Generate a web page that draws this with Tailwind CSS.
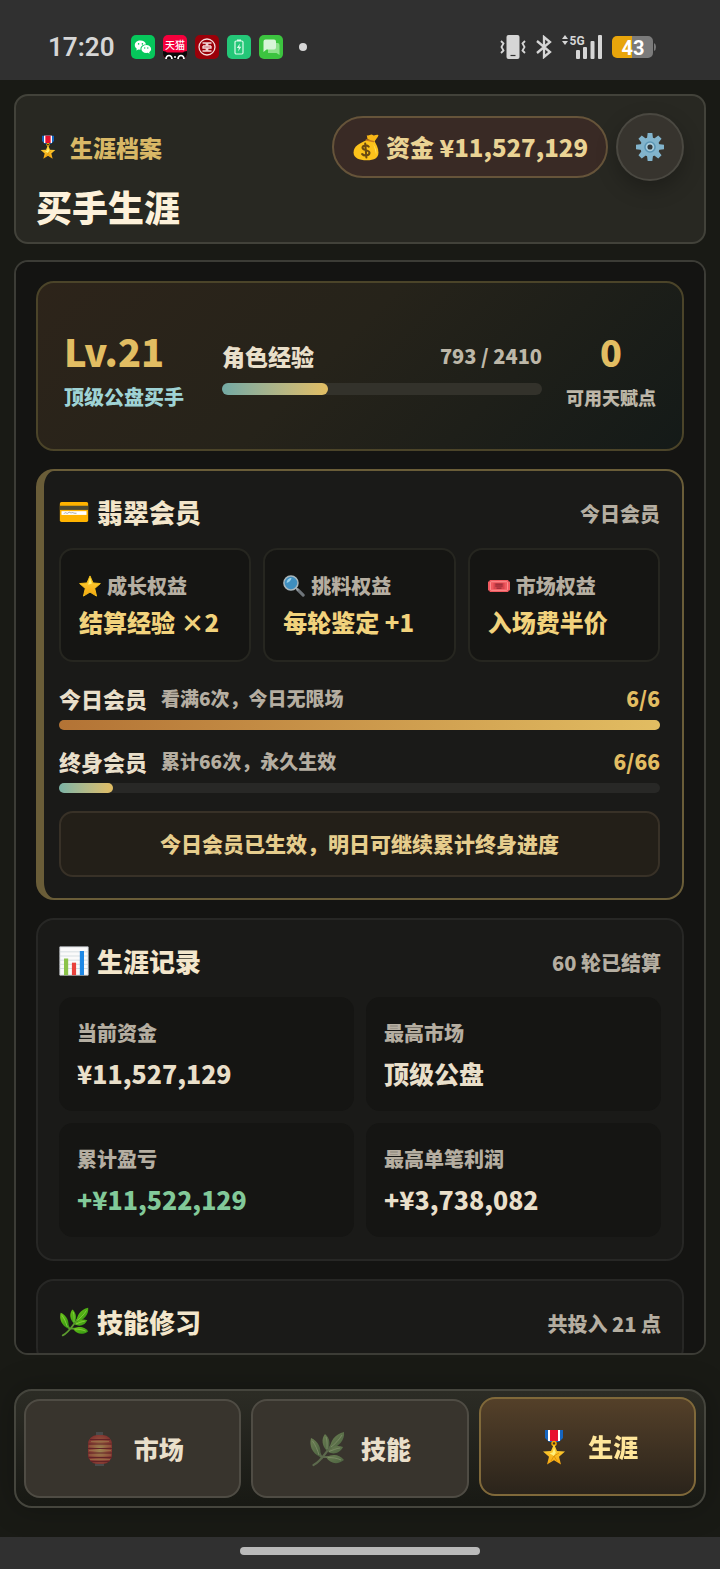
<!DOCTYPE html>
<html lang="zh-CN">

<head>
    <meta charset="UTF-8">
    <meta name="viewport" content="width=device-width, initial-scale=1.0">
    <title>买手生涯</title>
    <script src="https://cdn.jsdelivr.net/npm/@tailwindcss/browser@4"></script>
</head>

<body class="flex h-screen flex-col overflow-hidden bg-[#191a15] font-['Noto_Sans_CJK_SC',sans-serif] font-black text-[#e9dfca]">

    <!-- Shared icons -->
    <svg class="absolute size-0" aria-hidden="true">
        <defs>
            <linearGradient id="gold" x1="0" y1="0" x2="0" y2="1">
                <stop offset="0" stop-color="#ffd93d" />
                <stop offset="1" stop-color="#f5a50f" />
            </linearGradient>
            <linearGradient id="leafFill" x1="0" y1="0" x2="1" y2="1">
                <stop offset="0" stop-color="#6cc417" />
                <stop offset="1" stop-color="#2f9412" />
            </linearGradient>
            <radialGradient id="lampFill" cx=".5" cy=".5" r=".6">
                <stop offset="0" stop-color="#ffe57a" />
                <stop offset=".5" stop-color="#e8734a" />
                <stop offset="1" stop-color="#c01f2c" />
            </radialGradient>
        </defs>
        <symbol id="medal" viewBox="0 0 36 36">
            <path fill="#1565c0" d="M9 1h18v8l-4 4H13l-4-4z" />
            <path fill="#fff" d="M12 1h12v11H12z" />
            <path fill="#e8102e" d="M14 1h8v11h-8z" />
            <circle cx="18" cy="14.500" r="2" fill="none" stroke="#f2a600" stroke-width="1.500" />
            <path fill="url(#gold)" d="M18 15l3 7 8 .6-6 5.200 2 7.700-7-4.200-7 4.200 2-7.700-6-5.200 8-.6z" />
            <path fill="#fff07a" d="M18 19l1.800 4.500L18 27l-4.500-2.800 3-.7z" />
            <path fill="none" stroke="#d98a00" stroke-width=".7" d="M18 27l5-3M18 27l3 5M18 27l-3 5" />
        </symbol>
        <symbol id="leaf" viewBox="0 0 36 36">
            <path fill="none" stroke="#5c9a2e" stroke-width="2.200" stroke-linecap="round" d="M4.500 34C12 31 16 22 26 10M13 27L8 18M15 26h12M19 19l-3-8M20 19h10" />
            <g fill="url(#leafFill)">
                <path d="M2 7c7 3 11 10 9 19C3 22 0 15 2 7z" />
                <path d="M16 3c5 4 6 11 2 17-5-5-6-12-2-17z" />
                <path d="M35 1c1 8-5 15-14 17C21 10 26 3 35 1z" />
                <path d="M34 16c-3 6-9 8-15 5 4-6 9-7 15-5z" />
                <path d="M35 29c-6 5-14 4-18-3 7-3 13-3 18 3z" />
            </g>
            <path fill="none" stroke="#a5e05a" stroke-width=".7" d="M3.500 10c3 4 5 9 6.500 14M17 6c1.500 4 1 8 1 12M33 4c-3 5-7 9-11 12M31 17c-4 .5-7 2-11 3.500M32 29c-4-2-9-2.500-13-2.500" />
        </symbol>
        <symbol id="lantern" viewBox="0 0 36 36">
            <path fill="#5b6068" d="M14 1h7v4h-7zM13 32h9v3h-9z" />
            <rect x="6" y="4" width="24" height="29" rx="9" fill="url(#lampFill)" />
            <path fill="none" stroke="#8d1420" stroke-width="1.200" d="M8 8.500h20M6 13h24M6 17.500h24M6 22h24M6 26.500h24M9 30.500h18" />
            <path fill="none" stroke="#ffb968" stroke-width=".7" d="M9 10.500h18M7 15h22M7 19.500h22M7 24h22M8 28.500h20" />
        </symbol>
        <symbol id="moneybag" viewBox="0 0 36 36">
            <path fill="#f8b616" d="M20 8l-1-5c3 1 4-1 6-1s2 2 4 1c2-1 5-1 5 0-1 3-3 5-5 8z" />
            <path fill="#fcc21b" d="M19 9h9c3 5 6 10 6 16 0 7-5 10-15 10S2 32 2 25c0-8 8-12 17-16z" />
            <path fill="none" stroke="#c6791a" stroke-width="2" stroke-linecap="round" d="M18.500 9l9 2" />
            <path fill="#ffe05c" d="M27 14c4 5 5 10 4 14-1-5-2-10-4-14z" />
            <path fill="none" stroke="#6b4a12" stroke-width="2.600" stroke-linecap="round" d="M21.500 17.500c-2-2.500-8-2-8 1.500 0 4 9 2 9 6.500 0 4-7 4.500-9.500 1.500M17 13.500l1.500 18" />
        </symbol>
        <symbol id="gear" viewBox="0 0 36 36">
            <g fill="#82b4cc">
                <path d="M15 0h6l1 8h-8zM15 36h6l1-8h-8zM0 15v6l8 1v-8zM36 15v6l-8 1v-8z" />
                <path d="M15 0h6l1 8h-8zM15 36h6l1-8h-8zM0 15v6l8 1v-8zM36 15v6l-8 1v-8z" transform="rotate(45 18 18)" />
                <circle cx="18" cy="18" r="12.500" />
            </g>
            <circle cx="18" cy="18" r="7.500" fill="#5b95b4" />
            <circle cx="18" cy="18" r="5.500" fill="#a9cede" />
            <circle cx="18" cy="18" r="3.300" fill="#33383a" />
        </symbol>
        <symbol id="card" viewBox="0 0 36 36">
            <rect x="1" y="6" width="34" height="24" rx="2" fill="#ffb300" />
            <path fill="#4e4a32" d="M1 10.500h34v5H1z" />
            <path fill="#fff" d="M3 17h30v4.500H3z" />
            <path fill="none" stroke="#666" stroke-width=".7" d="M6 20c2-3 3 1 5-1s3 1 4 0 3 1 6 .5" />
        </symbol>
        <symbol id="star" viewBox="0 0 36 36">
            <path fill="url(#gold)" stroke="#fcc419" stroke-width="1.500" stroke-linejoin="round" d="M18 1.500l5 11.500 12 1-9.300 8 3 12.500L18 28 7.300 34.500l3-12.500L1 14l12-1z" />
            <path fill="#fff176" d="M18 5l3 9-6 2z" />
        </symbol>
        <symbol id="lens" viewBox="0 0 36 36">
            <path stroke="#6f757a" stroke-width="5" stroke-linecap="round" d="M24 24l9 9" />
            <path stroke="#9aa2a8" stroke-width="3" d="M21 21l4 4" />
            <circle cx="13" cy="13" r="11.500" fill="#3f8fc0" stroke="#a9b7bd" stroke-width="2.500" />
            <path fill="#9ad0ea" d="M6 13c0-5 4-8 8-8-1 4-4 7-8 8z" />
        </symbol>
        <symbol id="ticket" viewBox="0 0 36 36">
            <path fill="#f0595f" d="M3 8h30a3 3 0 0 0 3 3v14a3 3 0 0 0-3 3H3a3 3 0 0 0-3-3V11a3 3 0 0 0 3-3z" />
            <rect x="4" y="11" width="28" height="14" rx="1.500" fill="none" stroke="#ff9d9d" stroke-width="1.300" />
            <rect x="9" y="13" width="18" height="10" fill="#d8454d" />
            <path fill="none" stroke="#7d2430" stroke-width="1.500" d="M12 15h12M12 18h12M14 21.500h8" />
        </symbol>
        <symbol id="chart" viewBox="0 0 36 36">
            <path fill="#fafafa" stroke="#c9cdd0" d="M1 1h34v34H1z" />
            <path stroke="#cfd8dc" d="M1 7h34M1 12h34M1 17h34M1 22h34M1 27h34" />
            <path fill="#8bc34a" d="M6 15h5v20H6z" />
            <path fill="#e8413c" d="M15.500 20h5v15h-5z" />
            <path fill="#1e88e5" d="M25 6h5v29h-5z" />
        </symbol>
    </svg>

    <!-- Status bar -->
    <div class="flex h-20 shrink-0 items-center justify-between bg-[#303030] px-12 pt-3.5 text-[#d6d6d6]">
        <div class="flex items-center gap-2">
            <span class="mr-2 font-['Roboto',sans-serif] text-[26px] leading-8 font-semibold">17:20</span>
            <svg class="size-6" viewBox="0 0 24 24">
                <rect width="24" height="24" rx="5" fill="#06c75b" />
                <path fill="#fff" d="M9.500 5.500c-3.300 0-5.700 2.100-5.700 4.700 0 1.500.8 2.700 2 3.500l-.5 1.800 2.200-1.100 2 .3c-.4-3.300 2-5.400 5.500-5.300-.5-2.300-2.700-3.900-5.500-3.900z" />
                <path fill="#fff" d="M15.300 10c-2.800 0-4.900 1.800-4.900 4s2.100 4 4.900 4l1.500-.2 1.800.9-.4-1.500c1.200-.8 1.900-1.900 1.900-3.200 0-2.200-2.100-4-4.800-4z" />
                <g fill="#06c75b">
                    <circle cx="7.600" cy="8.900" r=".8" />
                    <circle cx="11.400" cy="8.900" r=".8" />
                    <circle cx="13.700" cy="13" r=".7" />
                    <circle cx="16.800" cy="13" r=".7" />
                </g>
            </svg>
            <svg class="size-6" viewBox="0 0 24 24">
                <rect width="24" height="24" rx="5" fill="#f5003c" />
                <path fill="#090909" d="M0 16q3 0 4 1.500h16q1-1.500 4-1.500v3a5 5 0 0 1-5 5H5a5 5 0 0 1-5-5z" />
                <g fill="none" stroke="#fff" stroke-width="1.700">
                    <path d="M3 24a3 3.500 0 0 1 6 0M15 24a3 3.500 0 0 1 6 0" />
                </g>
                <circle cx="12" cy="22" r="1" fill="#fff" />
                <text x="12" y="13.500" text-anchor="middle" font-size="10" font-weight="500" fill="#fff">天猫</text>
            </svg>
            <svg class="size-6" viewBox="0 0 24 24">
                <rect width="24" height="24" rx="5" fill="#9b0009" />
                <g fill="none" stroke="#f5dddd" stroke-width="1.300">
                    <circle cx="12" cy="12" r="8" />
                    <path d="M7.500 8h3.800v3H8M7.500 16h3.800v-3H8v-2M16.500 8h-3.800v3H16M16.500 16h-3.800v-3H16v-2" />
                </g>
            </svg>
            <svg class="size-6" viewBox="0 0 24 24">
                <rect width="24" height="24" rx="5" fill="#24c778" />
                <rect x="8" y="6" width="8" height="13" rx="1.200" fill="none" stroke="#d9fbe9" stroke-width="1.200" />
                <path fill="#d9fbe9" d="M10 4.500h4v1.500h-4zM12.800 8.500l-3 4.500h2l-.7 3.500 3.200-4.700h-2z" />
            </svg>
            <svg class="size-6" viewBox="0 0 24 24">
                <rect width="24" height="24" rx="5" fill="#3cc43f" />
                <path fill="#8ee18b" d="M9 8h9.500a2 2 0 0 1 2 2v10l-3-2H9z" />
                <path fill="#d8f5d8" d="M6.500 4.500H15a2 2 0 0 1 2 2v6a2 2 0 0 1-2 2H7.500l-3 2.500V6.500a2 2 0 0 1 2-2z" />
            </svg>
            <span class="ml-2 size-2 rounded-full bg-[#d6d6d6]"></span>
        </div>
        <div class="mr-4 flex items-center gap-2.5">
            <svg class="h-6 w-6.5" viewBox="0 0 26 24" fill="none" stroke="currentColor" stroke-width="1.800">
                <rect x="6.500" y="0" width="13" height="24" rx="2" fill="currentColor" stroke="none" />
                <path stroke="#303030" stroke-width="1.200" d="M10.500 20.500h5" />
                <path d="M1 6l2.500 2.500L1.500 12l2 3.500L1 18M25 6l-2.500 2.500 2 3.500-2 3.500L25 18" />
            </svg>
            <svg class="h-6 w-4" viewBox="0 0 16 24" fill="none" stroke="currentColor" stroke-width="2.300">
                <path d="M1 6l13 11-6 5V2l6 5L1 18" />
            </svg>
            <svg class="h-6 w-10" viewBox="0 0 40 24" fill="currentColor">
                <path d="M0 4l3-4 3 4zM0 6l3 4 3-4z" />
                <text x="7.500" y="9.500" font-family="Roboto, sans-serif" font-size="12" font-weight="700">5G</text>
                <rect x="14" y="15" width="4" height="9" rx="1" />
                <rect x="21" y="12" width="4" height="12" rx="1" />
                <rect x="28.500" y="6" width="4" height="18" rx="1" />
                <rect x="36" y="0" width="4" height="24" rx="1" />
            </svg>
            <svg class="h-6 w-11" viewBox="0 0 44 24">
                <path fill="#7b7b7b" d="M20 1h16a5 5 0 0 1 5 5v12a5 5 0 0 1-5 5H20zM42 8q2 1 2 4t-2 4z" />
                <path fill="#e8a50b" d="M5 1h15v22H5a5 5 0 0 1-5-5V6a5 5 0 0 1 5-5z" />
                <text x="21" y="19.500" text-anchor="middle" font-family="Roboto, sans-serif" font-size="20" font-weight="700" fill="#fff">43</text>
            </svg>
        </div>
    </div>

    <!-- Header -->
    <header class="mx-3.5 mt-3.5 flex shrink-0 items-start justify-between rounded-[14px] border-2 border-[#42423a] bg-[#282822] px-5 pt-[17px] pb-[11px]">
        <div>
            <p class="flex h-17 items-center gap-2.5 text-[23px] text-[#d9b866]">
                <svg class="size-6"><use href="#medal" /></svg>生涯档案
            </p>
            <h1 class="text-[36px] leading-[50px] text-[#fdf1da]">买手生涯</h1>
        </div>
        <div class="flex items-center gap-2">
            <div class="flex h-[62px] items-center gap-1.5 rounded-full border-2 border-[#66543a] bg-[#392a25] px-[18px] text-2xl text-[#ead394]">
                <svg class="size-7"><use href="#moneybag" /></svg>资金 ¥11,527,129
            </div>
            <button aria-label="设置" class="flex size-17 items-center justify-center rounded-full border-2 border-[#4a4841] bg-[#37342e] shadow-[0_8px_20px_rgba(0,0,0,0.25)]">
                <svg class="size-7"><use href="#gear" /></svg>
            </button>
        </div>
    </header>

    <!-- Scrolling content -->
    <main class="mx-3.5 mt-4 flex min-h-0 flex-1 flex-col gap-[18px] overflow-y-auto rounded-[14px] border-2 border-[#3c3c36] bg-[#141412] px-5 pt-[19px] [scrollbar-width:none]">

        <section class="grid shrink-0 grid-cols-[134px_1fr_auto] items-center gap-6 rounded-[18px] border-2 border-[#4b4429] bg-linear-[135deg,#2d241a,#26231a_45%,#1e1f19_70%,#141a18] px-[26px] py-10">
            <div>
                <p class="text-[38px] leading-[56px] text-[#e2bd62]">Lv.21</p>
                <p class="mt-1.5 text-xl leading-6 whitespace-nowrap text-[#9fd3d5]">顶级公盘买手</p>
            </div>
            <div>
                <div class="flex h-[38px] items-center justify-between">
                    <span class="text-[23px]">角色经验</span>
                    <span class="text-xl text-[#bdb7a8]">793 / 2410</span>
                </div>
                <div class="mt-2 h-3 rounded-full bg-[#33322b]">
                    <div class="h-full rounded-full bg-linear-to-r from-[#72a9a4] to-[#e2bd62]" style="width: 33%"></div>
                </div>
            </div>
            <div class="text-center">
                <p class="text-[36px] leading-[56px] text-[#e2bd62]">0</p>
                <p class="mt-1.5 text-lg leading-6 text-[#bdb7a8]">可用天赋点</p>
            </div>
        </section>

        <section class="shrink-0 rounded-[18px] border-2 border-l-8 border-[#6a5d38] bg-[#1a1a18] pt-[21px] pr-[22px] pb-[21px] pl-[15px]">
            <div class="flex items-center justify-between">
                <h2 class="flex items-center gap-2 text-[26px] leading-10 text-[#f3e6cb]">
                    <svg class="size-[30px]"><use href="#card" /></svg>翡翠会员
                </h2>
                <span class="pt-1 text-xl text-[#b5aea1]">今日会员</span>
            </div>
            <div class="mt-4 grid grid-cols-3 gap-3">
                <div class="rounded-[14px] border-2 border-[#262620] bg-[#151513] px-[18px] py-5">
                    <p class="flex items-center gap-1.5 text-xl leading-8 text-[#b5aea1]"><svg class="size-[22px]"><use href="#star" /></svg>成长权益</p>
                    <p class="mt-0.5 text-2xl leading-9 text-[#f1d27c]">结算经验 ×2</p>
                </div>
                <div class="rounded-[14px] border-2 border-[#262620] bg-[#151513] px-[18px] py-5">
                    <p class="flex items-center gap-1.5 text-xl leading-8 text-[#b5aea1]"><svg class="size-[22px]"><use href="#lens" /></svg>挑料权益</p>
                    <p class="mt-0.5 text-2xl leading-9 text-[#f1d27c]">每轮鉴定 +1</p>
                </div>
                <div class="rounded-[14px] border-2 border-[#262620] bg-[#151513] px-[18px] py-5">
                    <p class="flex items-center gap-1.5 text-xl leading-8 text-[#b5aea1]"><svg class="size-[22px]"><use href="#ticket" /></svg>市场权益</p>
                    <p class="mt-0.5 text-2xl leading-9 text-[#f1d27c]">入场费半价</p>
                </div>
            </div>

            <div class="mt-5 flex items-center leading-8">
                <span class="text-[22px]">今日会员</span>
                <span class="ml-3.5 text-[19px] text-[#b5aea1]">看满6次，今日无限场</span>
                <span class="ml-auto text-[21px] text-[#e2bd62]">6/6</span>
            </div>
            <div class="mt-1.5 h-2.5 rounded-full bg-[#282826]">
                <div class="h-full rounded-full bg-linear-to-r from-[#b37335] to-[#e2bd62]" style="width: 100%"></div>
            </div>
            <div class="mt-[15px] flex items-center leading-8">
                <span class="text-[22px]">终身会员</span>
                <span class="ml-3.5 text-[19px] text-[#b5aea1]">累计66次，永久生效</span>
                <span class="ml-auto text-[21px] text-[#e2bd62]">6/66</span>
            </div>
            <div class="mt-1.5 h-2.5 rounded-full bg-[#282826]">
                <div class="h-full rounded-full bg-linear-to-r from-[#7ab3a6] to-[#e2bd62]" style="width: 9%"></div>
            </div>
            <button disabled class="mt-[18px] h-[66px] w-full rounded-[14px] border-2 border-[#383127] bg-[#231f18] text-[21px] text-[#e6cd8d]">今日会员已生效，明日可继续累计终身进度</button>
        </section>

        <section class="shrink-0 rounded-[18px] border-2 border-[#272725] bg-[#1a1a18] px-[21px] pt-[21px] pb-[22px]">
            <div class="flex items-center justify-between">
                <h2 class="flex items-center gap-2 text-[26px] leading-10 text-[#f3e6cb]">
                    <svg class="size-[30px]"><use href="#chart" /></svg>生涯记录
                </h2>
                <span class="pt-1 text-xl text-[#b5aea1]">60 轮已结算</span>
            </div>
            <dl class="mt-4 grid grid-cols-2 gap-3">
                <div class="rounded-[14px] bg-[#151513] px-[18px] pt-5 pb-[18px]">
                    <dt class="text-xl leading-8 text-[#b5aea1]">当前资金</dt>
                    <dd class="mt-1 text-[25px] leading-10">¥11,527,129</dd>
                </div>
                <div class="rounded-[14px] bg-[#151513] px-[18px] pt-5 pb-[18px]">
                    <dt class="text-xl leading-8 text-[#b5aea1]">最高市场</dt>
                    <dd class="mt-1 text-[25px] leading-10">顶级公盘</dd>
                </div>
                <div class="rounded-[14px] bg-[#151513] px-[18px] pt-5 pb-[18px]">
                    <dt class="text-xl leading-8 text-[#b5aea1]">累计盈亏</dt>
                    <dd class="mt-1 text-[25px] leading-10 text-[#82c999]">+¥11,522,129</dd>
                </div>
                <div class="rounded-[14px] bg-[#151513] px-[18px] pt-5 pb-[18px]">
                    <dt class="text-xl leading-8 text-[#b5aea1]">最高单笔利润</dt>
                    <dd class="mt-1 text-[25px] leading-10">+¥3,738,082</dd>
                </div>
            </dl>
        </section>

        <section class="shrink-0 rounded-[18px] border-2 border-[#272725] bg-[#1a1a18] px-[21px] pt-[21px] pb-[22px]">
            <div class="flex items-center justify-between">
                <h2 class="flex items-center gap-2 text-[26px] leading-10 text-[#f3e6cb]">
                    <svg class="size-[30px]"><use href="#leaf" /></svg>技能修习
                </h2>
                <span class="pt-1 text-xl text-[#b5aea1]">共投入 21 点</span>
            </div>
        </section>
    </main>

    <!-- Tabs -->
    <nav class="mx-3.5 mt-[34px] mb-[29px] grid shrink-0 grid-cols-3 gap-2.5 rounded-[18px] border-2 border-[#45453d] bg-linear-to-b from-[#2c2c25] to-[#181914] p-2 text-[25px] shadow-[0_0_30px_rgba(0,0,0,0.25)]">
        <button class="flex h-[99px] items-center justify-center gap-4 rounded-2xl border-2 border-[#4f4c44] bg-[#38342d]">
            <svg class="size-9 opacity-50"><use href="#lantern" /></svg>市场
        </button>
        <button class="flex h-[99px] items-center justify-center gap-4 rounded-2xl border-2 border-[#4f4c44] bg-[#38342d]">
            <svg class="size-9 opacity-60 grayscale-60"><use href="#leaf" /></svg>技能
        </button>
        <button aria-current="page" class="flex h-[99px] -translate-y-0.5 items-center justify-center gap-4 rounded-2xl border-2 border-[#80693a] bg-linear-to-b from-[#544029] to-[#2b241b] text-[#ffe69a]">
            <svg class="size-9"><use href="#medal" /></svg>生涯
        </button>
    </nav>

    <!-- Gesture bar -->
    <div class="flex h-8 shrink-0 justify-center bg-[#303030] pt-2.5">
        <div class="h-2 w-1/3 rounded-full bg-[#bababa]"></div>
    </div>

</body>

</html>
